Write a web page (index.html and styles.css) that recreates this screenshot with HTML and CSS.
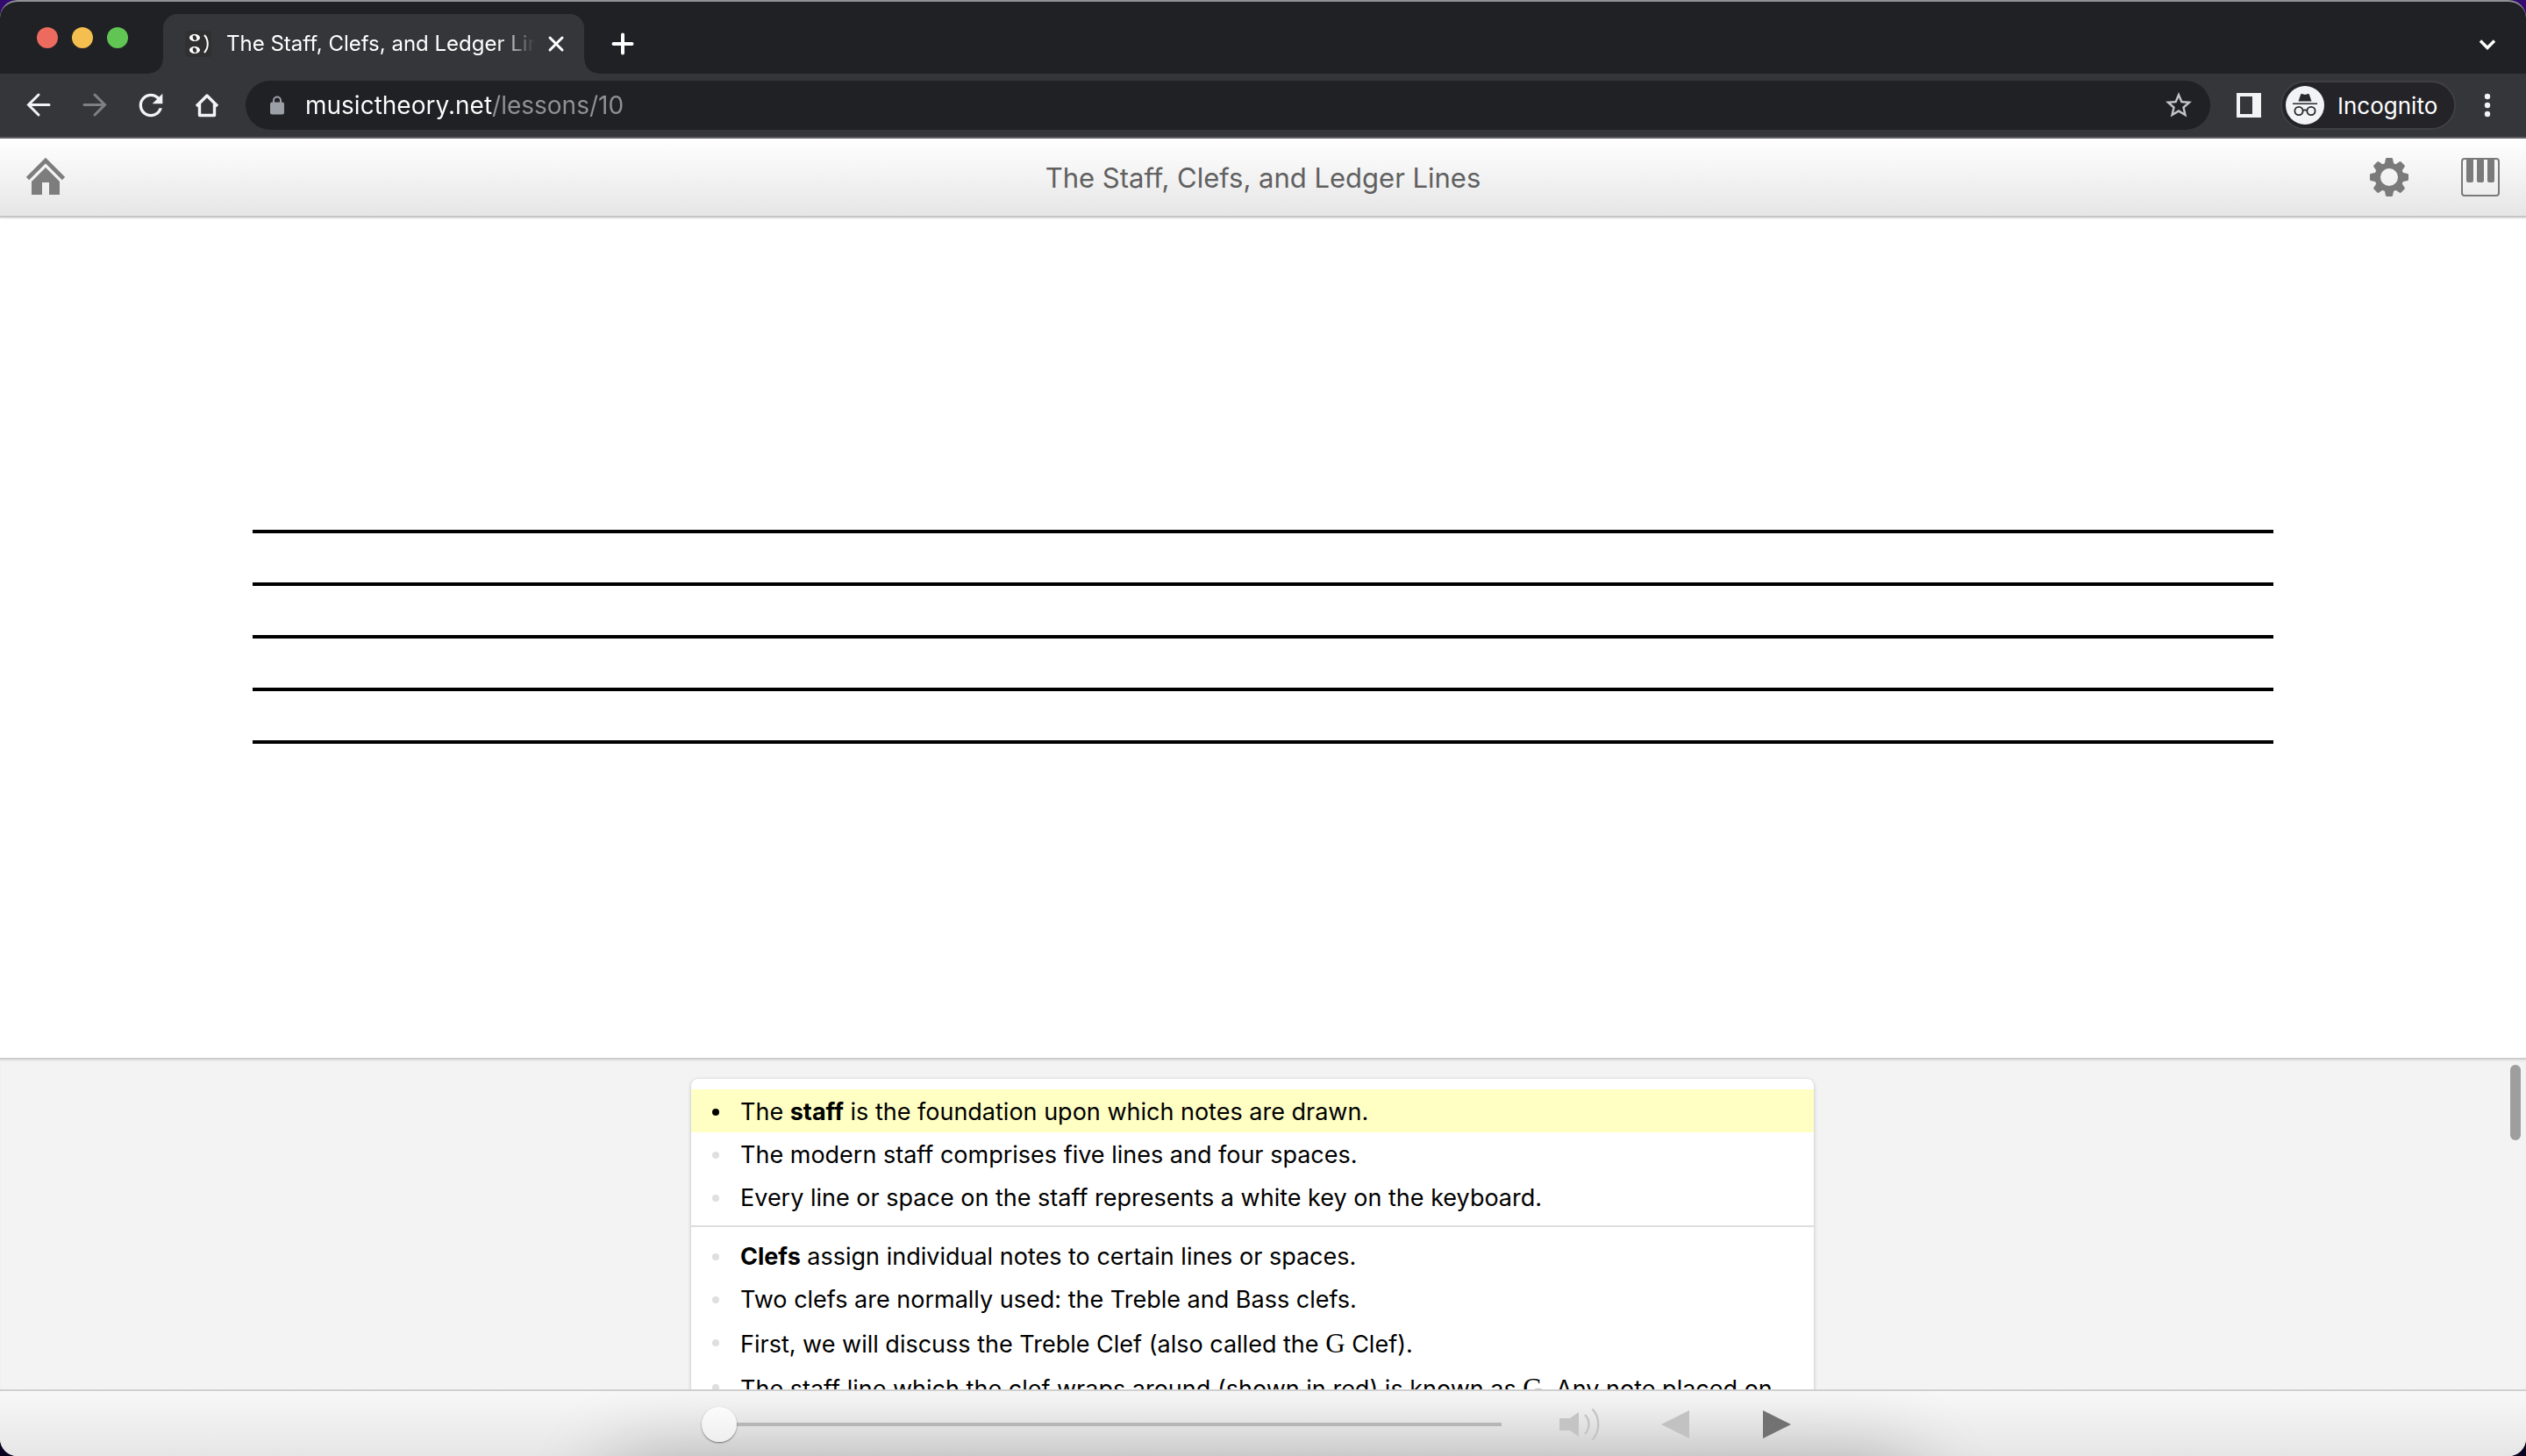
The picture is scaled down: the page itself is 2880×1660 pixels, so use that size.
FILE: index.html
```html
<!DOCTYPE html>
<html lang="en">
<head>
<meta charset="utf-8">
<title>The Staff, Clefs, and Ledger Lines</title>
<link rel="stylesheet" href="styles.css">
</head>
<body>
<div class="window">
  <div class="tab-strip">
    <div class="lights">
      <button class="light light-close" aria-label="Close window"></button>
      <button class="light light-min" aria-label="Minimize window"></button>
      <button class="light light-max" aria-label="Maximize window"></button>
    </div>
    <div class="tab">
      <svg class="favicon" width="30" height="30" viewBox="0 0 30 30" aria-hidden="true">
        <rect width="30" height="30" rx="4" fill="#303030"/>
        <g fill="#fff" fill-rule="evenodd">
          <path d="M11 4c3.600 0 6 1.800 6 4s-2.400 4-6 4-6-1.800-6-4 2.400-4 6-4zm-.6 1.200c-1.500 0-1.900 1.200-1.600 2.800.3 1.800 1.200 2.900 2.700 2.900s2-1.200 1.700-2.900c-.3-1.600-1.300-2.800-2.800-2.800z"/>
          <path d="M11 18c3.600 0 6 1.800 6 4s-2.400 4-6 4-6-1.800-6-4 2.400-4 6-4zm-.6 1.200c-1.500 0-1.900 1.200-1.600 2.800.3 1.800 1.200 2.900 2.700 2.900s2-1.200 1.700-2.900c-.3-1.600-1.300-2.800-2.800-2.800z"/>
        </g>
        <path d="M22 5c5 5.500 5 14.500 0 20" fill="none" stroke="#fff" stroke-width="2"/>
      </svg>
      <span class="tab-title">The Staff, Clefs, and Ledger Lines</span>
      <button class="tab-close" aria-label="Close tab">
        <svg width="20" height="20" viewBox="0 0 20 20"><path d="M3 3l14 14M17 3L3 17" fill="none" stroke="#fff" stroke-width="3" stroke-linecap="round"/></svg>
      </button>
    </div>
    <button class="strip-button" aria-label="New tab">
      <svg width="28" height="28" viewBox="0 0 28 28"><path d="M14 3.500v21M3.500 14h21" fill="none" stroke="#fff" stroke-width="4" stroke-linecap="round"/></svg>
    </button>
    <button class="strip-button strip-search" aria-label="Search tabs">
      <svg width="24" height="24" viewBox="0 0 24 24"><path d="M4 8.500l8 8 8-8" fill="none" stroke="#fff" stroke-width="3.400"/></svg>
    </button>
  </div>

  <div class="toolbar">
    <button class="nav-button" aria-label="Back">
      <svg width="32" height="32" viewBox="0 0 32 32"><path d="M28 15.500H5M16 4L4.500 15.500 16 27" fill="none" stroke="#f1f3f4" stroke-width="3" stroke-linecap="round"/></svg>
    </button>
    <button class="nav-button" aria-label="Forward">
      <svg width="32" height="32" viewBox="0 0 32 32"><path d="M4 15.500h23M16 4l11.500 11.500L16 27" fill="none" stroke="#7f8083" stroke-width="3" stroke-linecap="round"/></svg>
    </button>
    <button class="nav-button" aria-label="Reload">
      <svg width="40" height="40" viewBox="0 0 24 24"><path fill="#f1f3f4" d="M17.650 6.350A7.958 7.958 0 0 0 12 4c-4.420 0-7.990 3.580-7.990 8s3.570 8 7.990 8c3.730 0 6.840-2.550 7.730-6h-2.080A5.990 5.990 0 0 1 12 18c-3.310 0-6-2.690-6-6s2.690-6 6-6c1.660 0 3.140.69 4.220 1.780L13 11h7V4l-2.350 2.350z"/></svg>
    </button>
    <button class="nav-button" aria-label="Home">
      <svg width="32" height="32" viewBox="0 0 32 32"><path d="M4 17L16 5l12 12M7.500 14v13.500h17V14" fill="none" stroke="#f1f3f4" stroke-width="3.400" stroke-linejoin="round"/></svg>
    </button>
    <div class="omnibox">
      <svg class="lock" width="16" height="22" viewBox="0 0 16 22" aria-hidden="true"><rect y="7.500" width="16" height="14" rx="2" fill="#9aa0a6"/><path d="M4 9V5.500a4 4 0 0 1 8 0V9" fill="none" stroke="#9aa0a6" stroke-width="2"/></svg>
      <input class="address" type="text" aria-label="Address" value="musictheory.net/lessons/10">
      <button class="bookmark" aria-label="Bookmark this page">
        <svg width="36" height="36" viewBox="0 0 24 24"><path fill="#c3c4c6" d="M22 9.240l-7.190-.62L12 2 9.190 8.630 2 9.240l5.460 4.730L5.820 21 12 17.270 18.180 21l-1.630-7.030L22 9.240zM12 15.400l-3.760 2.270 1-4.280-3.320-2.880 4.380-.38L12 6.100l1.710 4.040 4.380.38-3.320 2.880 1 4.280L12 15.400z"/></svg>
      </button>
    </div>
    <button class="side-panel" aria-label="Side panel">
      <svg width="28" height="28" viewBox="0 0 28 28"><path fill="#f1f3f4" fill-rule="evenodd" d="M0 0h28v28H0zM4 4v20h14V4z"/></svg>
    </button>
    <button class="profile">
      <svg width="44" height="44" viewBox="0 0 44 44" aria-hidden="true">
        <circle cx="22" cy="22" r="22" fill="#f1f3f4"/>
        <path d="M14.500 17.500l2.500-7.500q.4-1.200 1.600-.9l3.400.9 3.400-.9q1.200-.3 1.600.9l2.500 7.500zM8 19.500h28v1.500H8z" fill="#28292c"/>
        <g fill="none" stroke="#28292c" stroke-width="1.800"><circle cx="15" cy="28.500" r="4.600"/><circle cx="29" cy="28.500" r="4.600"/><path d="M19.600 28q2.400-1.400 4.800 0"/></g>
      </svg>
      <span>Incognito</span>
    </button>
    <button class="menu" aria-label="Menu">
      <svg width="8" height="28" viewBox="0 0 8 28"><g fill="#f1f3f4"><circle cx="4" cy="4" r="3.200"/><circle cx="4" cy="14" r="3.200"/><circle cx="4" cy="24" r="3.200"/></g></svg>
    </button>
  </div>

  <header class="lesson-header">
    <a class="header-icon" href="/" aria-label="Home">
      <svg width="44" height="44" viewBox="0 0 44 44"><path d="M1.500 23.500L22 3l20.500 20.500" fill="none" stroke="#7d7d7d" stroke-width="4.600"/><path d="M22 11l16 16v15H26V28h-8v14H6V27z" fill="#7d7d7d"/></svg>
    </a>
    <h1 class="lesson-title">The Staff, Clefs, and Ledger Lines</h1>
    <div class="header-actions">
      <button class="header-icon" aria-label="Settings">
        <svg width="44" height="44" viewBox="-22 -22 44 44">
          <circle r="13.300" fill="none" stroke="#7a7a7a" stroke-width="6.600"/>
          <g fill="#7a7a7a">
            <path id="tooth" d="M-5.500-14l1.500-7q.2-1 1.200-1h5.600q1 0 1.200 1l1.500 7z"/>
            <use href="#tooth" transform="rotate(45)"/><use href="#tooth" transform="rotate(90)"/><use href="#tooth" transform="rotate(135)"/><use href="#tooth" transform="rotate(180)"/><use href="#tooth" transform="rotate(225)"/><use href="#tooth" transform="rotate(270)"/><use href="#tooth" transform="rotate(315)"/>
          </g>
        </svg>
      </button>
      <button class="header-icon" aria-label="Keyboard">
        <svg width="44" height="44" viewBox="0 0 44 44"><rect x="1" y="1" width="42" height="42" rx="3" fill="none" stroke="#7a7a7a" stroke-width="2"/><path d="M6 1h8v25q0 2-2 2H8q-2 0-2-2zM18 1h8v25q0 2-2 2h-4q-2 0-2-2zM30 1h8v25q0 2-2 2h-4q-2 0-2-2z" fill="#7a7a7a"/></svg>
      </button>
    </div>
  </header>

  <main class="lesson">
    <div class="stage">
      <div class="staff" role="img" aria-label="Five-line staff">
        <i></i><i></i><i></i><i></i><i></i>
      </div>
    </div>
    <section class="transcript">
      <div class="transcript-body">
        <div class="card">
          <ul class="steps">
            <li class="step step-current">The <b>staff</b> is the foundation upon which notes are drawn.</li>
            <li class="step">The modern staff comprises five lines and four spaces.</li>
            <li class="step">Every line or space on the staff represents a white key on the keyboard.</li>
          </ul>
          <ul class="steps">
            <li class="step"><b>Clefs</b> assign individual notes to certain lines or spaces.</li>
            <li class="step">Two clefs are normally used: the Treble and Bass clefs.</li>
            <li class="step step-note">First, we will discuss the Treble Clef (also called the <span class="note">G</span> Clef).</li>
            <li class="step step-note">The staff line which the clef wraps around (shown in red) is known as <span class="note">G</span>. Any note placed on</li>
          </ul>
        </div>
      </div>
      <div class="scrollbar"><div class="thumb"></div></div>
    </section>
  </main>

  <footer class="player">
    <div class="controls">
      <input class="progress" type="range" min="0" max="100" value="0" aria-label="Lesson progress">
      <button class="control" aria-label="Sound">
        <svg width="48" height="48" viewBox="0 0 48 48"><path d="M2 17h12l10-7v28l-10-7H2z" fill="#c4c4c4"/><path d="M31 13c6 6 6 16 0 22M39.500 6.500c9 9.500 9 25.500 0 35" fill="none" stroke="#c4c4c4" stroke-width="2.400"/></svg>
      </button>
      <button class="control" aria-label="Previous step">
        <svg width="48" height="48" viewBox="0 0 48 48"><path d="M6 24L38 8v32z" fill="#c2c2c2"/></svg>
      </button>
      <button class="control" aria-label="Next step">
        <svg width="48" height="48" viewBox="0 0 48 48"><path d="M42 24L10 8v32z" fill="#727272"/></svg>
      </button>
    </div>
  </footer>
</div>
</body>
</html>
```
FILE: styles.css
```css
* {
  box-sizing: border-box;
}

body {
  margin: 0;
  background: linear-gradient(#330a6e, #0a0020);
  font-family: Inter, "Liberation Sans", sans-serif;
}

button {
  display: flex;
  align-items: center;
  justify-content: center;
  flex: none;
  margin: 0;
  padding: 0;
  border: 0;
  background: none;
  font: inherit;
  color: inherit;
}

svg {
  display: block;
  flex: none;
}

.window {
  display: flex;
  flex-direction: column;
  height: 100vh;
  overflow: hidden;
  border-top: 2px solid #8f9295;
  border-radius: 20px;
  background: #fff;
}

/* Browser tabs */
.tab-strip {
  display: flex;
  align-items: flex-end;
  flex: none;
  height: 82px;
  padding: 0 24px 0 42px;
  background: #202124;
}

.lights {
  display: flex;
  align-self: center;
  gap: 16px;
  margin-right: 40px;
}

.light {
  width: 24px;
  height: 24px;
  border-radius: 50%;
}

.light-close { background: #ed6a5e; }
.light-min { background: #f5bf4f; }
.light-max { background: #61c554; }

.tab {
  position: relative;
  display: flex;
  align-items: center;
  width: 480px;
  height: 68px;
  padding: 0 20px 0 25px;
  border-radius: 16px 16px 0 0;
  background: #35363a;
  color: #fff;
}

.tab::before,
.tab::after {
  content: "";
  position: absolute;
  bottom: 0;
  width: 16px;
  height: 16px;
}

.tab::before {
  right: 100%;
  background: radial-gradient(circle at 0 0, transparent 15px, #35363a 16px);
}

.tab::after {
  left: 100%;
  background: radial-gradient(circle at 100% 0, transparent 15px, #35363a 16px);
}

.favicon {
  margin-right: 17px;
}

.tab-title {
  flex: 1;
  overflow: hidden;
  white-space: nowrap;
  font-size: 24px;
  line-height: 32px;
  -webkit-mask-image: linear-gradient(90deg, #000 310px, transparent 352px);
  mask-image: linear-gradient(90deg, #000 310px, transparent 352px);
}

.tab-close {
  width: 24px;
  height: 32px;
  margin-left: 12px;
}

.strip-button {
  width: 48px;
  height: 68px;
  margin-left: 20px;
}

.strip-search {
  width: 40px;
  margin-left: auto;
}

/* Browser toolbar */
.toolbar {
  display: flex;
  align-items: center;
  flex: none;
  height: 74px;
  padding: 0 30px 0 12px;
  border-bottom: 2px solid #5f6064;
  background: #35363a;
  color: #fff;
}

.nav-button {
  width: 64px;
  height: 56px;
}

.omnibox {
  display: flex;
  align-items: center;
  flex: 1;
  height: 56px;
  margin-left: 12px;
  padding: 0 18px 0 28px;
  border-radius: 28px;
  background: #202124;
}

.address {
  flex: 1;
  min-width: 0;
  height: 40px;
  margin: 0 0 0 24px;
  padding: 0;
  border: 0;
  background: linear-gradient(90deg, #fff 213px, #919295 213px) text;
  color: transparent;
  font: 28px/40px Inter, "Liberation Sans", sans-serif;
}

.side-panel {
  width: 28px;
  margin: 0 22px 0 30px;
}

.profile {
  justify-content: flex-start;
  gap: 15px;
  width: 200px;
  height: 56px;
  padding-left: 4px;
  border: 2px solid #3f3f44;
  border-radius: 28px;
  background: #232328;
  font-size: 26px;
}

.menu {
  width: 28px;
  height: 56px;
  margin-left: 22px;
}

/* Lesson page */
.lesson-header {
  position: relative;
  display: grid;
  grid-template-columns: 1fr auto 1fr;
  align-items: center;
  flex: none;
  height: 90px;
  padding: 0 30px;
  border-bottom: 2px solid #c6c6c6;
  background: linear-gradient(#fff, #e6e6e6);
  box-shadow: 0 1px 2px rgba(0, 0, 0, 0.12);
}

.header-icon {
  width: 44px;
  height: 44px;
}

.lesson-title {
  margin: 0;
  padding-top: 1px;
  font-size: 31px;
  line-height: 40px;
  font-weight: 400;
  color: #606060;
}

.header-actions {
  display: flex;
  justify-content: flex-end;
  gap: 60px;
}

.lesson {
  display: flex;
  flex-direction: column;
  flex: 1;
  min-height: 0;
}

.stage {
  display: flex;
  flex-direction: column;
  justify-content: center;
  flex: 1;
  padding: 0 10% 2px;
}

.staff {
  display: flex;
  flex-direction: column;
  gap: 56px;
}

.staff i {
  height: 4px;
  background: #000;
}

.transcript {
  display: flex;
  flex: 0 0 378px;
  overflow: hidden;
  border-top: 2px solid #ccc;
  background: #f3f3f3;
  box-shadow: inset 0 2px 2px rgba(0, 0, 0, 0.05);
}

.transcript-body {
  flex: 1;
  padding-top: 22px;
}

.card {
  max-width: 1280px;
  margin: 0 auto;
  padding-top: 12px;
  border-radius: 8px;
  background: #fff;
  box-shadow: 0 1px 4px rgba(0, 0, 0, 0.22);
  color: #000;
  font-size: 27px;
  line-height: 47px;
}

.steps {
  margin: 0;
  padding: 0 0 8px;
  list-style: none;
}

.steps + .steps {
  padding-top: 8px;
  border-top: 2px solid #dedede;
}

.step {
  position: relative;
  padding: 2px 24px 0 56px;
}

.step::before {
  content: "";
  position: absolute;
  left: 24px;
  top: 22px;
  width: 8px;
  height: 8px;
  border-radius: 50%;
  background: #dfdfdf;
}

.step-current {
  background: #ffffc4;
}

.step-current::before {
  background: #000;
}

.step-note {
  padding-top: 4px;
}

.note {
  font-family: "Liberation Serif", serif;
  font-size: 31px;
  line-height: 40px;
}

.scrollbar {
  flex: none;
  width: 24px;
  padding: 6px;
}

.thumb {
  height: 86px;
  border-radius: 6px;
  background: #9e9e9e;
}

/* Player bar */
.player {
  position: relative;
  flex: none;
  height: 76px;
  padding-top: 2px;
  overflow: hidden;
  border-top: 2px solid #cfcfcf;
  background: linear-gradient(#f8f8f8, #e6e6e6);
}

.player::before {
  content: "";
  position: absolute;
  top: 100%;
  left: 24%;
  right: 24%;
  height: 120px;
  border-radius: 40px;
  box-shadow: 0 0 90px rgba(0, 0, 0, 0.24);
}

.controls {
  position: relative;
  display: flex;
  align-items: center;
  max-width: 1280px;
  height: 72px;
  margin: 0 auto;
}

.progress {
  appearance: none;
  flex: 1;
  height: 42px;
  margin: 0 32px 0 0;
  background: linear-gradient(#b6b6b6, #b6b6b6) center / 100% 4px no-repeat;
}

.progress::-webkit-slider-thumb {
  appearance: none;
  width: 40px;
  height: 40px;
  border-radius: 50%;
  background: linear-gradient(#fcfcfc, #eee);
  box-shadow: 0 1px 2px rgba(0, 0, 0, 0.5);
}

.control {
  width: 112px;
  height: 56px;
}
```
